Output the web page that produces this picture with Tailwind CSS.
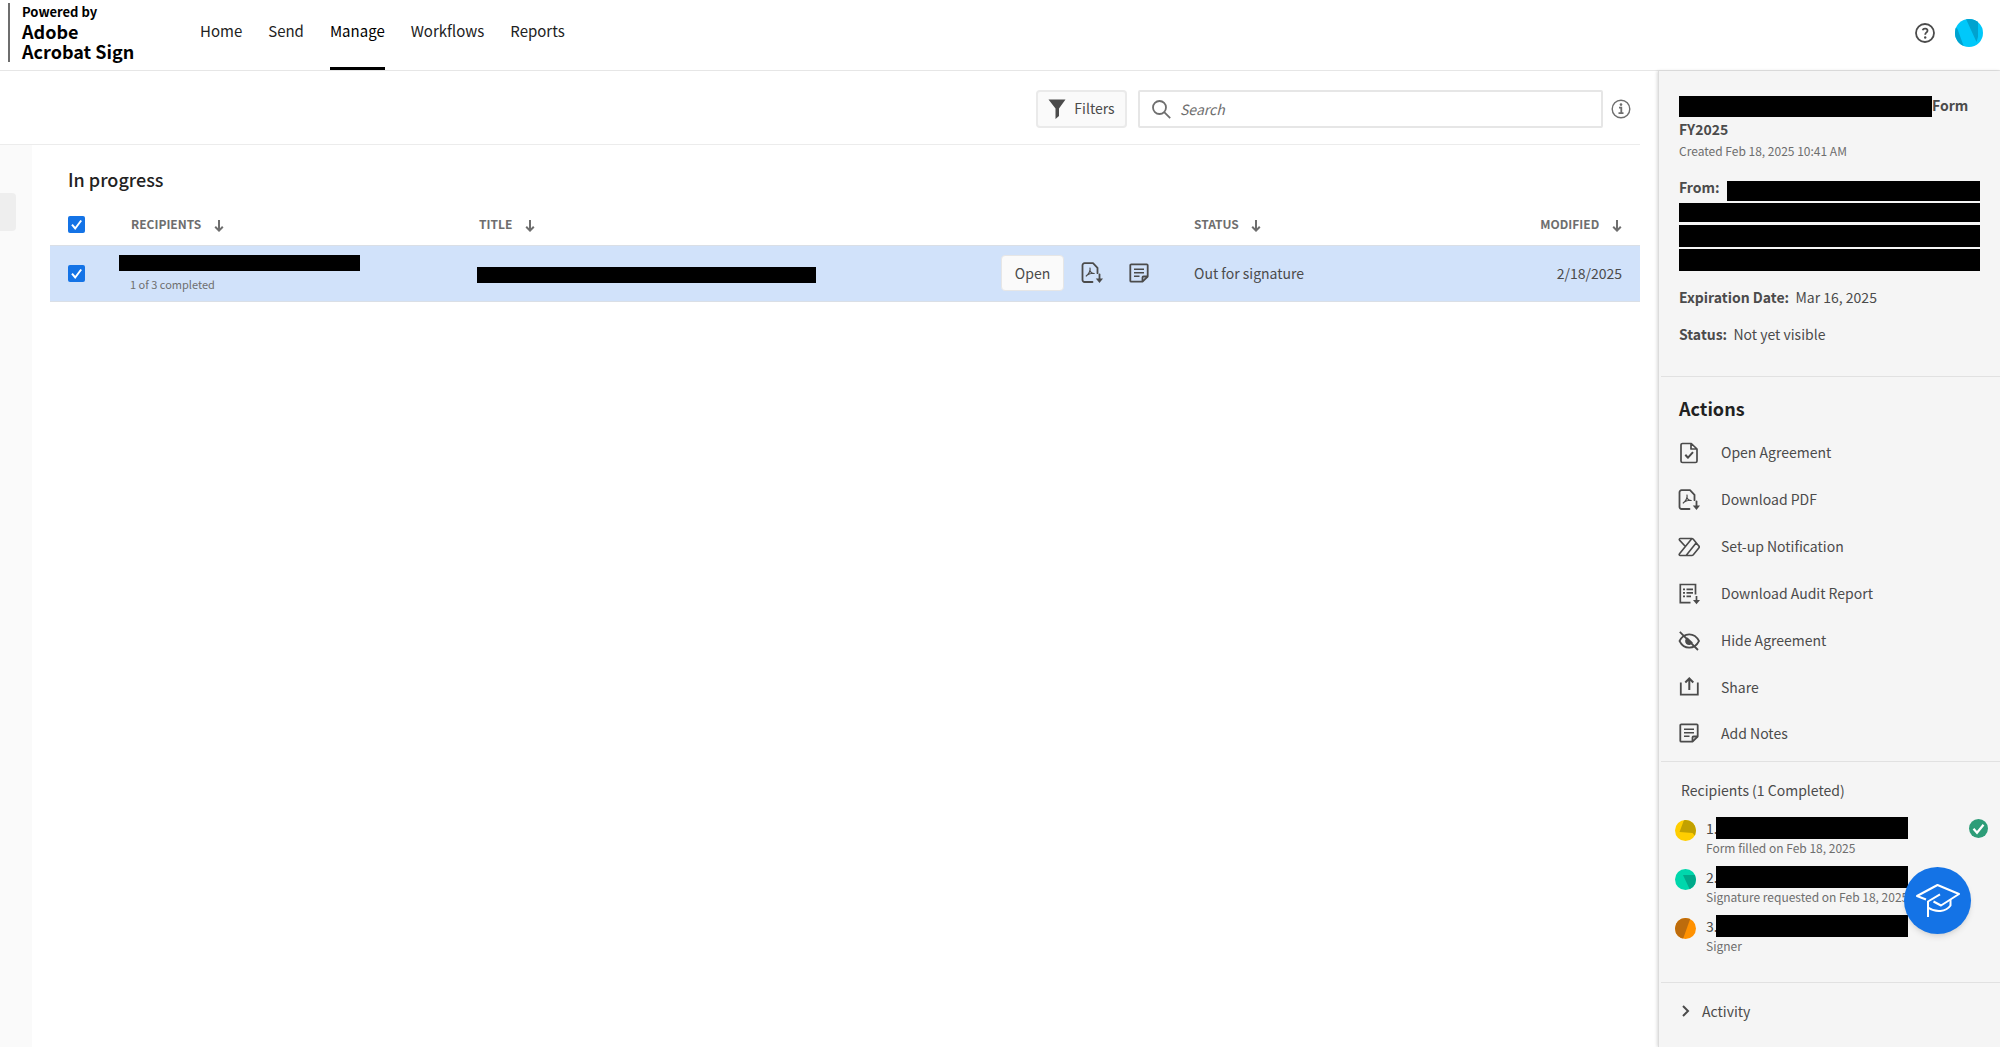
<!DOCTYPE html>
<html lang="en">
<head>
    <meta charset="UTF-8">
    <title>Manage - Acrobat Sign</title>
    <meta name="viewport" content="width=device-width, initial-scale=1.0">
    <script src="https://cdn.jsdelivr.net/npm/@tailwindcss/browser@4"></script>
</head>
<body class="min-h-screen flex flex-col bg-white font-['Noto_Sans_CJK_SC','Open_Sans',sans-serif] text-[14px] text-[#4b4b4b]">

    <!-- Shared icons -->
    <svg class="hidden">
        <symbol id="i-arrow" viewBox="0 0 10 12"><path d="M5 0v10M1.2 6.8 5 10.6l3.800-3.800" fill="none" stroke="currentColor" stroke-width="2"/></symbol>
        <symbol id="i-pdf" viewBox="0 0 22 22">
            <g fill="none" stroke="currentColor" stroke-width="1.800" stroke-linecap="round" stroke-linejoin="round">
                <path d="M11.500 20H3.500A2 2 0 0 1 1.500 18V3.200A2 2 0 0 1 3.500 1.200h8.500L16.500 5.800v5.400"/>
                <path d="M9 6c.8 2.600-1.400 6.200-3.800 8M8.800 8.200c.8 2.200 2.400 3.300 4.400 3.300-2.600-.7-5 .2-7 1.400" stroke-width="1.200"/>
                <path d="M18.500 12.500v5"/>
            </g>
            <path d="M14.800 16.500h7.200L18.500 21z" fill="currentColor"/>
        </symbol>
        <symbol id="i-note" viewBox="0 0 20 20">
            <g fill="none" stroke="currentColor" stroke-width="1.800" stroke-linejoin="round">
                <path d="M18.700 13.500V2.300a1 1 0 0 0-1-1H2.300a1 1 0 0 0-1 1v15.400a1 1 0 0 0 1 1h11.200z"/>
                <path d="M13.500 18.500v-4a1 1 0 0 1 1-1h4"/>
                <path d="M5 6.200h10M5 9.700h10M5 13.200h5.500" stroke-width="1.600"/>
            </g>
        </symbol>
    </svg>

    <header class="h-[71px] border-b border-[#e6e6e6] flex items-stretch">
        <div class="ml-2 mt-[3px] mb-2 pl-3 border-l-2 border-[#6e6e6e] w-[152px] text-black font-bold">
            <div class="text-[13px] leading-[18px]">Powered by</div>
            <div class="text-[18px] leading-5">Adobe<br>Acrobat Sign</div>
        </div>
        <nav class="ml-10 flex gap-[26px] text-[15px] text-[#222] leading-[62px]">
            <a href="#">Home</a>
            <a href="#">Send</a>
            <a href="#" class="text-black border-b-[3px] border-black">Manage</a>
            <a href="#">Workflows</a>
            <a href="#">Reports</a>
        </nav>
        <div class="ml-auto mr-[17px] mb-[5px] flex items-center gap-5">
            <button type="button" aria-label="Help">
                <svg class="size-5 block" viewBox="0 0 20 20" fill="none" stroke="#4b4b4b">
                    <circle cx="10" cy="10" r="9" stroke-width="1.800"/>
                    <path d="M7.600 7.200c.8-2.300 5-2 4.900.5 0 1.700-2.300 1.900-2.300 4.100" stroke-width="1.800"/>
                    <circle cx="10.200" cy="14.500" r="1.200" fill="#4b4b4b" stroke="none"/>
                </svg>
            </button>
            <button type="button" aria-label="Account">
                <svg class="size-7 block" viewBox="0 0 28 28">
                    <clipPath id="av"><circle cx="14" cy="14" r="14"/></clipPath>
                    <g clip-path="url(#av)">
                        <path fill="#00c8fa" d="M0 0h28v28H0z"/>
                        <path fill="#00a2cf" d="M11 0h12v18l-1.500 5zM0 8l2.500 2L9 28H0z"/>
                    </g>
                </svg>
            </button>
        </div>
    </header>

    <div class="flex-1 flex">
        <main class="flex-1 mr-[18px] flex flex-col">
            <div class="h-[74px] pt-0.5 border-b border-[#ececec] flex items-center justify-end pr-[9px]">
                <button type="button" class="h-[38px] w-[91px] mr-[11px] flex items-center justify-center gap-2 rounded border-2 border-[#eaeaea] bg-[#fafafa]">
                    <svg class="w-[18px] h-5" viewBox="0 0 18 20" fill="#4b4b4b"><path d="M.500.500h17L11 9.500V17l-3.500 3V9.500z"/></svg>
                    Filters
                </button>
                <div class="relative w-[465px]">
                    <svg class="absolute left-[14px] top-[10px] size-[19px]" viewBox="0 0 19 19" fill="none" stroke="#6e6e6e" stroke-width="1.800"><circle cx="7.500" cy="7.500" r="6.500"/><path d="m12.200 12.200 6 6"/></svg>
                    <input type="text" aria-label="Search" placeholder="Search" class="block w-full h-[38px] pl-[40px] border-2 border-[#e6e6e6] rounded-xs placeholder:italic placeholder:text-[#6e6e6e]">
                </div>
                <button type="button" aria-label="Search info" class="ml-2">
                    <svg class="size-5 block" viewBox="0 0 20 20" fill="none" stroke="#6e6e6e"><circle cx="10" cy="10" r="8.800" stroke-width="1.400"/><path d="M8 8.700h2.300v5M7.500 14.200h5" stroke-width="1.800"/><circle cx="10" cy="5.600" r="1.300" fill="#6e6e6e" stroke="none"/></svg>
                </button>
            </div>

            <div class="flex-1 flex">
                <div class="w-8 bg-[#fafafa] pt-12">
                    <div class="w-4 h-[38px] rounded-r bg-[#eee]"></div>
                </div>
                <section class="flex-1 pl-[18px] pt-5">
                    <h2 class="pl-[18px] text-[18px] leading-7 font-medium text-[#222]">In progress</h2>
                    <table class="w-full table-fixed mt-[10px] text-left">
                        <colgroup>
                            <col class="w-[69px]"><col class="w-[358px]"><col><col class="w-[193px]"><col class="w-[226px]"><col class="w-[220px]">
                        </colgroup>
                        <thead class="text-[12px] leading-5 text-[#6e6e6e]">
                            <tr class="h-[42px]">
                                <th class="pl-[18px] pt-0.5">
                                    <label class="relative block size-[17px]">
                                        <input type="checkbox" checked aria-label="Select all" class="block appearance-none size-[17px] rounded-xs bg-[#1473e6]">
                                        <svg class="absolute inset-0" viewBox="0 0 17 17" fill="none" stroke="#fff" stroke-width="2"><path d="m4 8.700 3.200 3.800L13.200 4.500"/></svg>
                                    </label>
                                </th>
                                <th class="pl-3 font-bold">RECIPIENTS <svg class="inline ml-[10px] w-[10px] h-3 align-[-3px]"><use href="#i-arrow"/></svg></th>
                                <th class="pl-0.5 font-bold">TITLE <svg class="inline ml-[10px] w-[10px] h-3 align-[-3px]"><use href="#i-arrow"/></svg></th>
                                <th></th>
                                <th class="font-bold">STATUS <svg class="inline ml-[10px] w-[10px] h-3 align-[-3px]"><use href="#i-arrow"/></svg></th>
                                <th class="pr-[18px] font-bold text-right">MODIFIED <svg class="inline ml-[10px] w-[10px] h-3 align-[-3px]"><use href="#i-arrow"/></svg></th>
                            </tr>
                        </thead>
                        <tbody>
                            <tr class="h-[56px] bg-[#d1e2fa] border-y border-[#dadfe6]">
                                <td class="pl-[18px]">
                                    <label class="relative block size-[17px]">
                                        <input type="checkbox" checked aria-label="Select agreement" class="block appearance-none size-[17px] rounded-xs bg-[#1473e6]">
                                        <svg class="absolute inset-0" viewBox="0 0 17 17" fill="none" stroke="#fff" stroke-width="2"><path d="m4 8.700 3.200 3.800L13.200 4.500"/></svg>
                                    </label>
                                </td>
                                <td>
                                    <div class="w-[241px] h-4 mt-0.5 bg-black"></div>
                                    <div class="mt-1 pl-[11px] text-[11px] leading-[18px] text-[#6e6e6e]">1 of 3 completed</div>
                                </td>
                                <td><div class="w-[339px] h-4 mt-1 bg-black"></div></td>
                                <td>
                                    <div class="flex items-center">
                                        <button type="button" class="w-[63px] h-9 rounded bg-[#fafafa] border border-[#e6e6e6]">Open</button>
                                        <button type="button" aria-label="Download PDF" class="ml-[17px]"><svg class="block size-[22px]"><use href="#i-pdf"/></svg></button>
                                        <button type="button" aria-label="Add Notes" class="ml-[26px]"><svg class="block size-5"><use href="#i-note"/></svg></button>
                                    </div>
                                </td>
                                <td>Out for signature</td>
                                <td class="pr-[18px] text-right">2/18/2025</td>
                            </tr>
                        </tbody>
                    </table>
                </section>
            </div>
        </main>

        <aside class="w-[342px] bg-[#f5f5f5] border-l border-[#dcdcdc] shadow-[-1px_0_3px_rgba(0,0,0,0.15)]">
            <div class="ml-0.5 pl-[18px] pt-[22px] pb-[30px] border-b border-[#e1e1e1]">
                <h3 class="leading-6 font-bold"><span class="inline-block align-top mt-[3px] w-[253px] h-[21px] bg-black"></span>Form<br>FY2025</h3>
                <div class="text-[12px] leading-5 text-[#6e6e6e]">Created Feb 18, 2025 10:41 AM</div>
                <div class="mt-5 w-[301px] flex flex-col">
                    <div class="flex justify-between"><b class="leading-3">From:</b><span class="w-[253px] h-5 bg-black"></span></div>
                    <span class="mt-0.5 h-[19px] bg-black"></span>
                    <span class="mt-[3px] h-[22px] bg-black"></span>
                    <span class="mt-0.5 h-[22px] bg-black"></span>
                </div>
                <div class="mt-[14px] leading-6"><b>Expiration Date:</b>&nbsp; Mar 16, 2025</div>
                <div class="mt-[13px] leading-6"><b>Status:</b>&nbsp; Not yet visible</div>
            </div>

            <div class="ml-0.5 pl-[18px] pt-[17px] pb-[5px] border-b border-[#e1e1e1]">
                <h3 class="text-[18px] leading-7 font-bold text-[#222]">Actions</h3>
                <ul class="mt-[7px] -ml-px">
                    <li><button type="button" class="h-[47px] flex items-center gap-[21px]">
                        <svg class="size-[22px]" viewBox="0 0 22 22" fill="none" stroke="currentColor" stroke-width="1.700" stroke-linejoin="round"><path d="M4.500 1.500h8.800L19 7v12a1.500 1.500 0 0 1-1.500 1.500h-13A1.500 1.500 0 0 1 3 19V3a1.500 1.500 0 0 1 1.500-1.500zM13 1.800V7h5.800"/><path d="m7.300 12.800 2.700 2.900 5-5.600" stroke-width="2"/></svg>
                        Open Agreement</button></li>
                    <li><button type="button" class="h-[47px] flex items-center gap-[21px]">
                        <svg class="size-[22px]"><use href="#i-pdf"/></svg>
                        Download PDF</button></li>
                    <li><button type="button" class="h-[47px] flex items-center gap-[21px]">
                        <svg class="size-[22px]" viewBox="0 0 22 22" fill="none" stroke="currentColor" stroke-width="1.600" stroke-linejoin="round"><path d="M2.300 2.500h11.500a2 2 0 0 1 1.500.7l5.500 6.700a1.500 1.500 0 0 1 0 2l-5.500 6.900a2 2 0 0 1-1.500.7H2.300a1 1 0 0 1-.8-1.700L13.500 3M7.200 10.300 1.500 4.100a1 1 0 0 1 .8-1.600M8.300 19.300 18.300 6.800"/></svg>
                        Set-up Notification</button></li>
                    <li><button type="button" class="h-[47px] flex items-center gap-[21px]">
                        <svg class="size-[22px]" viewBox="0 0 22 22" fill="none" stroke="currentColor" stroke-width="1.700"><path d="M12.500 19.700H2.300V1.500h15.200v10M5 6.300h2M8.500 6.300h6.500M5 9.800h2M8.500 9.800h6.500M5 13.300h2M8.500 13.300h4.500M18.500 13v5"/><path d="M15 17h7l-3.500 4.300z" fill="currentColor" stroke="none"/></svg>
                        Download Audit Report</button></li>
                    <li><button type="button" class="h-[47px] flex items-center gap-[21px]">
                        <svg class="size-[22px]" viewBox="0 0 22 22" fill="none" stroke="currentColor" stroke-width="1.700"><path d="M1.500 11C3.500 7 7 4.300 11.200 4.300S19 7 21 11c-2 4-5.600 6.700-9.800 6.700S3.500 15 1.500 11z"/><path d="M1.800 1.800 20 20" stroke-width="1.800"/><path d="M9.500 7.400a4 4 0 1 0 5.300 5.200z" fill="currentColor" stroke="none"/></svg>
                        Hide Agreement</button></li>
                    <li><button type="button" class="h-[46px] flex items-center gap-[21px]">
                        <svg class="size-[22px]" viewBox="0 0 22 22" fill="none" stroke="currentColor" stroke-width="1.800"><path d="M2.800 6.500v12.200h17V6.500"/><path d="M11.300 14V3M7.300 6.500l4-4 4 4" stroke-width="2"/></svg>
                        Share</button></li>
                    <li><button type="button" class="h-[46px] flex items-center gap-[21px]">
                        <span class="w-[22px] pl-px"><svg class="size-5"><use href="#i-note"/></svg></span>
                        Add Notes</button></li>
                </ul>
            </div>

            <div class="relative ml-0.5 pl-[14px] pr-3 pt-4 pb-[27px] border-b border-[#e1e1e1]">
                <h4 class="pl-[6px] leading-6">Recipients (1 Completed)</h4>
                <ol class="mt-[15px] flex flex-col gap-[9px]">
                    <li class="flex">
                        <svg class="mt-[3px] mr-[10px] size-[21px]" viewBox="0 0 21 21"><clipPath id="r"><circle cx="10.500" cy="10.500" r="10.500"/></clipPath><g clip-path="url(#r)"><path fill="#ffce00" d="M0 0h21v21H0z"/><path fill="#c2a100" d="M9 0h12v17l-3.500-4L4.500 12z"/></g></svg>
                        <div>
                            <div class="flex leading-[22px]"><span class="w-[10px]">1.</span><span class="w-[192px] h-[22px] bg-black"></span></div>
                            <div class="text-[12px] leading-[18px] text-[#6e6e6e]">Form filled on Feb 18, 2025</div>
                        </div>
                        <svg class="ml-auto mt-[2px] size-[19px]" viewBox="0 0 19 19"><circle cx="9.500" cy="9.500" r="9.500" fill="#2d9d78"/><path d="m4.500 9.800 3.500 3.900 6.500-8" fill="none" stroke="#fff" stroke-width="2.200"/></svg>
                    </li>
                    <li class="flex">
                        <svg class="mt-[3px] mr-[10px] size-[21px]" viewBox="0 0 21 21"><g clip-path="url(#r)"><path fill="#00d7ac" d="M0 0h21v21H0z"/><path fill="#00a98a" d="M8 6h13v15h-6z"/></g></svg>
                        <div>
                            <div class="flex leading-[22px]"><span class="w-[10px]">2.</span><span class="w-[192px] h-[22px] bg-black"></span></div>
                            <div class="text-[12px] leading-[18px] text-[#6e6e6e]">Signature requested on Feb 18, 2025</div>
                        </div>
                    </li>
                    <li class="flex">
                        <svg class="mt-[3px] mr-[10px] size-[21px]" viewBox="0 0 21 21"><g clip-path="url(#r)"><path fill="#ff9100" d="M0 0h21v21H0z"/><path fill="#bd6c0c" d="M0 0h15.500L8 21H0z"/></g></svg>
                        <div>
                            <div class="flex leading-[22px]"><span class="w-[10px]">3.</span><span class="w-[192px] h-[22px] bg-black"></span></div>
                            <div class="text-[12px] leading-[18px] text-[#6e6e6e]">Signer</div>
                        </div>
                    </li>
                </ol>
                <button type="button" aria-label="Learn" class="absolute right-[29px] bottom-12 size-[67px] rounded-full bg-[#1473e6] shadow-md flex items-center justify-center">
                    <svg class="w-[46px] h-[36px]" viewBox="0 0 46 36" fill="none" stroke="#fff" stroke-width="2" stroke-linejoin="round">
                        <path d="M11 16.500 2 13 22.500 2 44 11 26 22.500 18.500 18.500"/>
                        <path d="M25 11.300 13 18.500V34M13 24.500c8 5.500 18 4.500 22.500-2v-6"/>
                    </svg>
                </button>
            </div>

            <button type="button" class="ml-[23px] pt-4 flex items-center leading-6">
                <svg class="mr-[12px] w-2 h-3" viewBox="0 0 8 12" fill="none" stroke="currentColor" stroke-width="2"><path d="m1 1 5 5-5 5"/></svg>
                Activity
            </button>
        </aside>
    </div>
</body>
</html>
